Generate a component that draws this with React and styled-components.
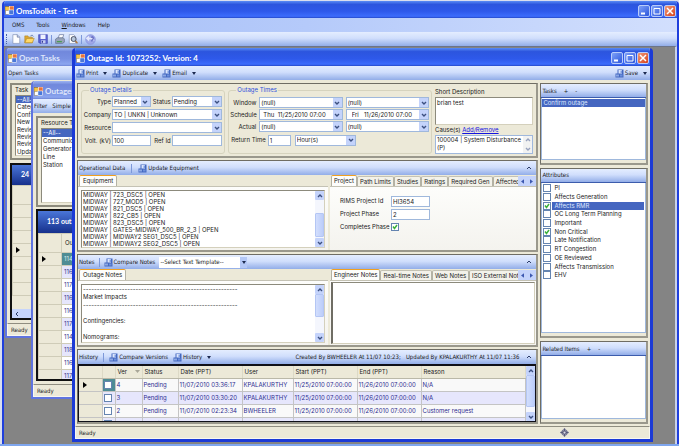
import React, { useState } from "react";
import styled, { createGlobalStyle, css } from "styled-components";

const formFont = `Inter, "Liberation Sans", Arial, sans-serif`;
const barFont = `"DejaVu Sans Condensed", "DejaVu Sans", Tahoma, sans-serif`;
const titleFont = `Lato, "Open Sans", "Trebuchet MS", sans-serif`;

const TASKS = ["--All--", "Category", "Confirm", "New", "Review", "Review", "Review", "Update"];
const RESOURCES = ["--All--", "Communication", "Generator", "Line", "Station"];
const OUTAGES = ["114", "116", "117", "116", "116", "117", "114", "118", "116", "117"];
const EQUIPMENT = [
  "MIDWAY | 723_DSC5 | OPEN",
  "MIDWAY | 727_MOD5 | OPEN",
  "MIDWAY | 821_DSC5 | OPEN",
  "MIDWAY | 822_CB5 | OPEN",
  "MIDWAY | 823_DSC5 | OPEN",
  "MIDWAY | GATES-MIDWAY_500_BR_2_3 | OPEN",
  "MIDWAY | MIDWAY2 SEG1_DSC5 | OPEN",
  "MIDWAY | MIDWAY2 SEG2_DSC5 | OPEN",
];
const ATTRIBUTES = [
  { name: "PI" },
  { name: "Affects Generation" },
  { name: "Affects RMR", checked: true, selected: true },
  { name: "OC Long Term Planning" },
  { name: "Important" },
  { name: "Non Critical", checked: true },
  { name: "Late Notification" },
  { name: "RT Congestion" },
  { name: "OE Reviewed" },
  { name: "Affects Transmission" },
  { name: "EHV" },
];
const HISTORY = [
  ["4", "Pending", "11/07/2010 03:36:17", "KPALAKURTHY", "11/25/2010 07:00:00", "11/26/2010 07:00:00", "N/A"],
  ["3", "Pending", "11/07/2010 03:30:20", "KPALAKURTHY", "11/25/2010 07:00:00", "11/26/2010 07:00:00", "N/A"],
  ["2", "Pending", "11/07/2010 02:23:34", "BWHEELER", "11/25/2010 07:00:00", "11/26/2010 07:00:00", "Customer request"],
  ["1", "Pending", "11/07/2010 02:22:04", "BWHEELER", "11/25/2010 07:00:00", "11/26/2010 07:00:00", "Customer request"],
];
const DASHES = "-".repeat(56);
const NOTES = `${DASHES}\nMarket Impacts\n${DASHES}\n\nContingencies:\n\nNomograms:`;

/* ---------- icons ---------- */

const FormIcon = () => (
  <svg width="9" height="9" viewBox="0 0 16 16" aria-hidden="true">
    <rect x="0" y="1" width="10" height="9" fill="#f4c64a" stroke="#8a6a2a" />
    <rect x="8" y="0" width="8" height="8" fill="#e8743c" stroke="#fff" />
    <rect x="1" y="8" width="7" height="7" fill="#fff" stroke="#9a8a6a" />
    <rect x="7" y="7" width="8" height="8" fill="#4a78d8" stroke="#fff" />
  </svg>
);

const ActionIcon = () => (
  <svg width="9" height="9" viewBox="0 0 18 18" aria-hidden="true">
    <path d="M5 1h12v16H1V9h4z" fill="#4468c0" />
    <rect x="7" y="2" width="7" height="7" fill="#dce6fc" />
    <rect x="11" y="3" width="3" height="5" fill="#7c9ce0" />
    <rect x="2" y="11" width="6" height="4" fill="#8ca8e4" />
    <rect x="10" y="11" width="5" height="4" fill="#6c90dc" />
  </svg>
);

const Chevron = ({ up }) => (
  <svg width="6" height="6" viewBox="0 0 6 6" aria-hidden="true">
    <path d={up ? "M1 4L3 2L5 4" : "M1 2L3 4L5 2"} fill="none" stroke="#3c5080" strokeWidth="1.4" />
  </svg>
);

const Caret = () => (
  <svg width="4" height="3" viewBox="0 0 4 3" aria-hidden="true">
    <path d="M0 0h4L2 3z" fill="#1c2a50" />
  </svg>
);

const SortMark = () => (
  <svg width="5" height="3" viewBox="0 0 5 3" aria-hidden="true">
    <path d="M0 0h5L2.5 3z" fill="#a8a698" />
  </svg>
);

const Side = ({ right }) => (
  <svg width="3" height="5" viewBox="0 0 4 6" aria-hidden="true">
    <path d={right ? "M0 0l4 3l-4 3z" : "M4 0L0 3l4 3z"} fill="#3c58b0" />
  </svg>
);

const RowArrow = () => (
  <svg width="4" height="6" viewBox="0 0 4 6" aria-hidden="true">
    <path d="M0 0l4 3l-4 3z" fill="#000" />
  </svg>
);

const Collapse = () => (
  <svg width="6" height="4" viewBox="0 0 6 4" aria-hidden="true">
    <path d="M1 3L3 1L5 3" fill="none" stroke="#2c3c68" />
  </svg>
);

const NewIcon = () => (
  <svg width="10" height="10" viewBox="0 0 16 16" aria-hidden="true">
    <path d="M3 1h7l4 4v10H3z" fill="#fff" stroke="#7888b0" />
    <path d="M10 1v4h4" fill="#c8d4f0" stroke="#5a6890" />
  </svg>
);
const OpenIcon = () => (
  <svg width="11" height="10" viewBox="0 0 17 16" aria-hidden="true">
    <path d="M1 3h5l1 2h6v9H1z" fill="#e0a830" stroke="#b08828" />
    <path d="M4 7h12l-3 7H1z" fill="#ffd868" stroke="#b08828" />
    <path d="M10 3q3-3 5 1" fill="none" stroke="#3c5890" />
  </svg>
);
const SaveIcon = () => (
  <svg width="10" height="10" viewBox="0 0 16 16" aria-hidden="true">
    <path d="M1 1h14v14H3l-2-2z" fill="#5a62d0" stroke="#4048b0" />
    <rect x="4" y="1" width="8" height="7" fill="#eef2ff" />
    <rect x="5" y="10" width="7" height="5" fill="#c4ccf0" />
    <rect x="6" y="11" width="2" height="3" fill="#343c98" />
  </svg>
);
const PrintIcon = () => (
  <svg width="10" height="10" viewBox="0 0 16 16" aria-hidden="true">
    <path d="M5 7l2-6h7l-2 6z" fill="#fff" stroke="#5a6890" />
    <path d="M1 8l3-2h9l2 2v5l-3 2H1z" fill="#98a4b8" stroke="#5a6888" />
    <path d="M3 12h8" stroke="#4a9a58" strokeWidth="2" />
  </svg>
);
const PreviewIcon = () => (
  <svg width="10" height="10" viewBox="0 0 16 16" aria-hidden="true">
    <path d="M2 1h7l3 3v11H2z" fill="#fff" stroke="#7888b0" />
    <circle cx="9" cy="8" r="4" fill="#b8c8dc" stroke="#444c60" strokeWidth="1.5" />
    <path d="M12 11l3 4" stroke="#b07838" strokeWidth="2.4" />
  </svg>
);
const HelpIcon = () => (
  <svg width="11" height="11" viewBox="0 0 16 16" aria-hidden="true">
    <circle cx="8" cy="8" r="7" fill="#a0a8e8" stroke="#8490dc" />
    <path d="M1 6l5-4v3q6 0 8 5q-4-3-8-2v3z" fill="#e4e8fc" />
    <path d="M9 5q3-2 3 1q0 2-2 3v2" fill="none" stroke="#5860b8" strokeWidth="1.5" />
  </svg>
);
const MoveIcon = () => (
  <svg width="9" height="9" viewBox="0 0 16 16" aria-hidden="true">
    <path d="M8 0l8 8l-8 8l-8-8z" fill="#8c8ca4" />
    <path d="M8 1v14M1 8h14M4 5l8 6M12 5l-8 6" stroke="#50506c" strokeWidth="1.5" />
    <circle cx="8" cy="8" r="2" fill="#dcdce8" />
  </svg>
);

/* ---------- shared parts ---------- */

const GlobalStyle = createGlobalStyle`
  * {
    box-sizing: border-box;
  }
  html, body {
    margin: 0;
    background: #d9deee;
  }
  body {
    font-family: ${formFont};
    font-size: 6px;
    line-height: 8px;
    color: #1a1a1a;
  }
  button, input, select, textarea {
    font: inherit;
    color: inherit;
    margin: 0;
    padding: 0;
    border: 0;
    border-radius: 0;
    background: none;
    outline: 0;
  }
  svg {
    display: block;
    flex-shrink: 0;
  }
`;

const barGradient = "linear-gradient(#e4edff, #d0defc 45%, #92ade8)";
const blueTitle = "linear-gradient(#5a8cf4, #2c55de 20%, #2e59ea 60%, #3c6cfc 90%, #2448c8)";
const paleTitle = "linear-gradient(#9db4f2, #7188dc 20%, #7890e2 60%, #8ca6f0 90%, #6e84d4)";

const Desktop = styled.div`
  min-height: 100vh;
  display: flex;
  flex-direction: column;
  padding: 1px 0 0 2px;
  border-bottom: 2px solid #7fa6ee;
`;

const Shell = styled.div`
  flex: 1;
  display: flex;
  flex-direction: column;
  border: 2px solid #1f3fdc;
  border-top: 0;
  border-bottom: 0;
  border-radius: 4px 4px 0 0;
  overflow: hidden;
`;

const TitleBar = styled.header`
  display: flex;
  align-items: center;
  flex-shrink: 0;
  gap: 2px;
  height: ${(p) => (p.$main ? 17 : 18)}px;
  padding: 2px 1px 0;
  background: ${(p) => (p.$inactive ? paleTitle : blueTitle)};
  color: ${(p) => (p.$inactive ? "#dfe6fb" : "#fff")};
`;

const TitleText = styled.h1`
  flex: 1;
  margin: 0;
  font-family: ${titleFont};
  font-size: 8px;
  line-height: 12px;
  font-weight: 700;
  white-space: nowrap;
`;

const CaptionGroup = styled.div`
  display: flex;
  gap: 1px;
`;

const Caption = styled.button`
  display: flex;
  width: 12px;
  height: 12px;
  border: 1px solid #b8ccfa;
  border-radius: 2px;
  background: ${(p) => (p.$close ? "linear-gradient(135deg, #f09a78, #d8431c)" : "linear-gradient(135deg, #7ea0f8, #2c56dc)")};
`;

const CaptionSvg = styled.svg`
  width: 10px;
  height: 10px;
`;

const MenuBar = styled.nav`
  display: flex;
  align-items: center;
  gap: 12px;
  height: 14px;
  padding: 0 8px;
  background: linear-gradient(90deg, #a6bff6, #b5cafa 45%, #d2dffd);
  font-family: ${barFont};
`;

const ToolStrip = styled.div`
  display: flex;
  align-items: center;
  flex-shrink: 0;
  gap: ${(p) => p.$gap || 4}px;
  height: 14px;
  padding: 0 3px 0 ${(p) => (p.$flush ? 1 : 2)}px;
  background: ${barGradient};
  font-family: ${barFont};
  white-space: nowrap;
`;

const Grip = styled.span`
  width: 2px;
  height: 10px;
  border-left: 1px dotted #4862a8;
`;

const Divider = styled.span`
  width: 1px;
  height: 9px;
  background: #7d98d8;
`;

const Spring = styled.span`
  flex: 1;
`;

const ToolButton = styled.button`
  display: flex;
  align-items: center;
  gap: 1px;
  white-space: nowrap;
`;

const Mdi = styled.main`
  position: relative;
  flex: 1;
  min-height: 398px;
  background: #848484;
  border-top: 1px solid #6c7488;
  border-right: 2px solid #c9d2ea;
  overflow: hidden;
`;

const edge = (p) => (p.$inactive ? "#5f74e0" : "#1b3ad6");

/* a child window, free on the MDI surface */
const Window = styled.section`
  position: absolute;
  display: flex;
  flex-direction: column;
  border: 2px solid ${edge};
  border-top: 0;
  border-radius: 4px 4px 0 0;
  background: #ece9d8;
  overflow: hidden;
`;

const TasksWindow = styled(Window)`
  top: 1px;
  left: 1px;
  width: 48%;
  height: 290px;
`;

const OutagesWindow = styled(Window)`
  top: 34px;
  left: 27px;
  width: 48%;
  height: 318px;
`;

const OutageWindow = styled(Window)`
  top: 1px;
  right: 22px;
  bottom: 2px;
  left: 68px;
  border-width: 0 3px 3px;
`;

const StatusBar = styled.footer`
  display: flex;
  align-items: center;
  flex-shrink: 0;
  height: 13px;
  padding: 0 80px 0 3px;
  border: 1px solid #f8f7f0;
  border-top: 1px solid #8f8d80;
  background: #ece9d8;
  font-family: ${barFont};
  justify-content: space-between;
`;

const inset = css`
  border: 1px solid #8c8a7c;
  border-right-color: #d4d0bc;
  border-bottom-color: #d4d0bc;
  background: #fff;
`;

const Body = styled.div`
  flex: 1;
  min-height: 0;
  display: flex;
  flex-direction: column;
  gap: ${(p) => p.$gap || 3}px;
  padding: 3px;
`;

const FilterBox = styled.div`
  display: flex;
  flex-direction: column;
  flex-shrink: 0;
  gap: 1px;
  height: ${(p) => p.$height}px;
  padding: 1px 3px 2px;
  border: 2px solid #8c8a7c;
  border-right-width: 1px;
`;

const PlainList = styled.ul`
  flex: 1;
  min-height: 0;
  display: grid;
  grid-auto-rows: ${(p) => (p.$fill ? "1fr" : "8px")};
  margin: 0;
  padding: 0;
  list-style: none;
  line-height: 7px;
  overflow: hidden;
  ${inset}
`;

const PlainItem = styled.li`
  min-height: 0;
  padding-left: 1px;
  white-space: nowrap;
  color: ${(p) => (p.$selected ? "#fff" : "#1a1a1a")};
  background: ${(p) => (p.$selected ? "#4566c0" : "none")};
`;

const BackGrid = styled.div`
  flex: 1;
  min-height: 0;
  display: flex;
  flex-direction: column;
  border: 2px solid #101010;
  overflow: hidden;
`;

const GridBanner = styled.h2`
  flex-shrink: 0;
  margin: 0;
  height: ${(p) => p.$height}px;
  padding-left: 9px;
  background: linear-gradient(#4a76d8, #16308c);
  color: #fff;
  font-family: ${titleFont};
  font-size: 7px;
  line-height: ${(p) => p.$height - 2}px;
  font-weight: 700;
`;

const BackTable = styled.table`
  width: 100%;
  table-layout: fixed;
  border-collapse: collapse;
  color: #34348c;
  th {
    height: 19px;
    text-align: left;
    vertical-align: middle;
    font-weight: 400;
    color: #1a1a1a;
    background: #ece9d8;
    border: 1px solid #cfccb8;
    padding: 0 3px;
  }
  td {
    height: 13px;
    padding: 0 2px;
    border: 1px solid #cfccb8;
    background: #fff;
  }
  tr:nth-child(even) td {
    background: #e6e6fc;
  }
  tbody tr td:first-child {
    background: #ece9d8;
    padding-left: 3px;
  }
  tbody tr:first-child td:nth-child(2) {
    background: ${(p) => (p.$teal ? "#4e8c94" : "#fff")};
    color: ${(p) => (p.$teal ? "#d8eef0" : "#34348c")};
  }
`;

const HScroll = styled.div`
  flex-shrink: 0;
  display: flex;
  align-items: center;
  height: 9px;
  padding-left: 3px;
  background: #c6d5fc;
`;

/* ---------- outage window layout ---------- */

const Workspace = styled.div`
  flex: 1;
  min-height: 0;
  display: grid;
  grid-template-columns: 463fr 108fr;
  gap: 2px;
  padding: 3px 2px 2px;
`;

const MainColumn = styled.div`
  min-width: 0;
  min-height: 0;
  display: grid;
  grid-template-rows: auto 92fr 93fr 75fr;
  gap: 2px;
`;

const SideColumn = styled.div`
  min-width: 0;
  min-height: 0;
  display: grid;
  grid-template-rows: 82fr 171fr 83fr;
  gap: 3px;
`;

const Panel = styled.section`
  display: flex;
  flex-direction: column;
  min-height: 0;
  min-width: 0;
  border: 1px solid #6f6d64;
  border-right: 2px solid #9a988c;
  border-bottom: 2px solid #9a988c;
  overflow: hidden;
`;

const DetailsPanel = styled(Panel)`
  flex-direction: row;
  gap: 3px;
  padding: 2px 3px;
`;

const Group = styled.fieldset`
  min-width: 0;
  margin: 0;
  padding: ${(p) => p.$top}px 2px 2px 1px;
  border: 1px solid #d6d3be;
  border-radius: 3px;
`;

const Legend = styled.legend`
  margin-left: 6px;
  padding: 0 1px;
  color: #2c50dc;
`;

const DetailsGroup = styled(Group)`
  flex: 143 1 0;
`;
const TimesGroup = styled(Group)`
  flex: 204 1 0;
`;

const DetailGrid = styled.div`
  display: grid;
  grid-template-columns: 28px 39fr 19px 51fr;
  grid-auto-rows: 11px;
  gap: 2px 1px;
  align-items: center;
`;

const TimeGrid = styled.div`
  display: grid;
  grid-template-columns: 26px 1fr 1fr;
  grid-auto-rows: 11px;
  gap: 1px 3px;
  align-items: center;
`;

const ReturnRow = styled.div`
  display: flex;
  align-items: center;
  gap: 2px;
  height: 12px;
  margin: 2px 73px 0 1px;
`;

const Label = styled.label`
  text-align: ${(p) => (p.$left ? "left" : "right")};
  white-space: nowrap;
`;

const TextInput = styled.input`
  width: 100%;
  min-width: 0;
  height: 11px;
  padding: 0 1px;
  border: 1px solid #9fb8dc;
  background: #fff;
`;

const ReturnInput = styled(TextInput)`
  width: 23px;
  margin-right: 2px;
`;

const ComboFrame = styled.span`
  display: flex;
  align-items: center;
  flex: 1;
  min-width: 0;
  height: 11px;
  border: 1px solid #9fb8dc;
  background: #fff;
  grid-column: span ${(p) => p.$span || 1};
`;

const ComboSelect = styled.select`
  flex: 1;
  min-width: 0;
  height: 9px;
  padding-left: ${(p) => p.$indent || 1}px;
  appearance: none;
`;

const ComboArrow = styled.span`
  display: flex;
  align-items: center;
  justify-content: center;
  width: 9px;
  height: 9px;
  background: #c4d3fb;
  pointer-events: none;
`;

const DescColumn = styled.div`
  flex: 101 1 0;
  min-width: 0;
  display: flex;
  flex-direction: column;
  gap: 1px;
  padding-top: 2px;
`;

const DescText = styled.textarea`
  display: block;
  width: 100%;
  height: 28px;
  padding: 1px;
  resize: none;
  overflow: hidden;
  ${inset}
`;

const Link = styled.a`
  color: #1414e0;
`;

const CauseBox = styled.div`
  display: flex;
  height: 19px;
  border: 1px solid #9fb8dc;
  background: #fff;
`;

const CauseText = styled.div`
  flex: 1;
  padding-left: 1px;
`;

const PanelHead = styled(ToolStrip)`
  padding: 0 4px 0 1px;
  border-bottom: ${(p) => (p.$ruled ? "1px solid #3c5cac" : "0")};
`;

const HeadTitle = styled.h2`
  margin: 0;
  font-size: 6px;
  font-weight: 400;
`;

const Split = styled.div`
  flex: 1;
  min-height: 0;
  display: grid;
  grid-template-columns: 252fr 208fr;
  gap: 2px;
`;

const TabPane = styled.div`
  display: flex;
  flex-direction: column;
  min-width: 0;
  min-height: 0;
`;

const TabStrip = styled.div`
  display: flex;
  align-items: flex-end;
  flex-shrink: 0;
  height: 11px;
  padding-left: 1px;
  overflow: hidden;
`;

const Tab = styled.button`
  flex-shrink: 0;
  height: ${(p) => (p.$active ? 11 : 10)}px;
  padding: 0 ${(p) => (p.$wide ? 3 : 2)}px;
  border: 1px solid #b4b2a4;
  border-bottom: 0;
  border-top: ${(p) => (p.$active ? "1px solid #f0a020" : "1px solid #c4c2b4")};
  border-radius: 2px 2px 0 0;
  background: ${(p) => (p.$active ? "#fdfdfb" : "#f3f2ea")};
  white-space: nowrap;
`;

const TabClip = styled.div`
  display: flex;
  align-items: flex-end;
  flex: 1;
  min-width: 0;
  overflow: hidden;
`;

const TabArrows = styled.div`
  display: flex;
  align-items: center;
  justify-content: space-around;
  width: 18px;
  height: 10px;
  flex-shrink: 0;
  background: #c4d3fb;
`;

const TabBody = styled.div`
  flex: 1;
  min-height: 0;
  display: flex;
  padding: ${(p) => p.$pad || "3px 3px 2px"};
  background: linear-gradient(#fdfdfb, #f4f3ee);
  border-top: 1px solid #c4c2b4;
`;

const ListFrame = styled.div`
  flex: 1;
  min-width: 0;
  display: flex;
  overflow: hidden;
  ${inset}
`;

const EquipmentList = styled.ul`
  flex: 1;
  min-width: 0;
  display: grid;
  grid-auto-rows: 1fr;
  align-items: center;
  margin: 0;
  padding: 0 0 0 1px;
  list-style: none;
  line-height: 7px;
  white-space: nowrap;
  li {
    min-height: 0;
  }
`;

const NotesText = styled.textarea`
  flex: 1;
  min-width: 0;
  padding: 0 1px;
  resize: none;
  overflow: hidden;
  white-space: pre;
`;

const EngineerText = styled.textarea`
  flex: 1;
  min-width: 0;
  resize: none;
  ${inset}
  border-left: 2px solid #6f6d64;
`;

const ProjectForm = styled.div`
  display: grid;
  grid-template-columns: 50px 39px;
  grid-auto-rows: 12px;
  gap: 1px;
  align-items: center;
`;

const Bar = styled.div`
  display: flex;
  flex-direction: column;
  flex-shrink: 0;
  width: 9px;
  background: #f4f6fd;
`;

const BarButton = styled.button`
  display: flex;
  align-items: center;
  justify-content: center;
  height: 9px;
  border-radius: 1px;
  background: ${(p) => (p.$faint ? "#f0efe8" : "#c4d3fb")};
  opacity: ${(p) => (p.$faint ? 0.5 : 1)};
`;

const Thumb = styled.span`
  flex: ${(p) => p.$size} 1 0;
  border: 1px solid #b4c6f4;
  border-radius: 1px;
  background: linear-gradient(90deg, #d2defd, #bccdfa);
`;

const Gap = styled.span`
  flex: ${(p) => p.$size} 1 0;
`;

const TemplateFrame = styled.span`
  display: flex;
  align-items: center;
  width: 88px;
  height: 11px;
  background: #fff;
`;

const TemplateArrow = styled.span`
  display: flex;
  align-items: center;
  justify-content: center;
  width: 7px;
  height: 11px;
  background: #b4c8f6;
  pointer-events: none;
`;

const Check = styled.input`
  flex-shrink: 0;
  width: 8px;
  height: 8px;
  appearance: none;
  border: 1px solid #6484b0;
  background: #fff;
`;

const CheckHolder = styled.span`
  position: relative;
  display: flex;
`;

const Tick = styled.svg`
  position: absolute;
  top: 1px;
  left: 1px;
  width: 6px;
  height: 6px;
  pointer-events: none;
`;

const SideList = styled.div`
  flex: 1;
  min-height: 0;
  margin-bottom: 3px;
  background: #fff;
  border: 1px solid #9fb8dc;
  border-top: 0;
  overflow: hidden;
`;

const TaskItem = styled.div`
  height: 8px;
  margin-top: 1px;
  padding-left: 1px;
  background: #4566c0;
  color: #dfe8ff;
`;

const AttributeList = styled.ul`
  display: grid;
  grid-template-rows: repeat(11, 1fr);
  height: 97px;
  margin: 0;
  padding: 1px 1px 0;
  list-style: none;
`;

const AttributeItem = styled.li`
  display: flex;
  align-items: center;
  min-height: 0;
  gap: 1px;
`;

const AttributeLabel = styled.label`
  flex: 1;
  padding-left: 2px;
  background: ${(p) => (p.$selected ? "#4566c0" : "none")};
  color: ${(p) => (p.$selected ? "#dfe8ff" : "inherit")};
`;

const HistoryFrame = styled.div`
  flex: 1;
  min-height: 0;
  display: flex;
  border: 1px solid #101018;
  border-top-width: 2px;
  overflow: hidden;
`;

const HistoryClip = styled.div`
  flex: 1;
  min-width: 0;
  overflow: hidden;
`;

const HistoryTable = styled.table`
  width: 100%;
  table-layout: fixed;
  border-collapse: collapse;
  white-space: nowrap;
  color: #2c2c90;
  th {
    height: 12px;
    padding: 0 2px;
    text-align: left;
    font-weight: 400;
    color: #1a1a1a;
    background: #ece9d8;
    border-right: 1px solid #dcd9c6;
    border-bottom: 1px solid #bab8a8;
  }
  td {
    height: 13px;
    padding: 0 1px;
    border-right: 1px solid #c4c4c4;
    border-bottom: 1px solid #c4c4c4;
    background: #f9f9f9;
  }
  tbody tr:nth-child(even) td {
    background: #e6e6fc;
  }
  tbody tr td:first-child {
    padding-left: 4px;
    background: #ece9d8;
  }
  tbody tr:first-child td:nth-child(2) {
    background: #4e8c94;
  }
`;

const SortHead = styled.span`
  display: flex;
  align-items: center;
  justify-content: space-between;
`;

const Stamp = styled.span`
  padding-right: 2px;
  white-space: pre;
`;

const Captions = () => (
  <CaptionGroup>
    <Caption aria-label="Minimize">
      <CaptionSvg viewBox="0 0 10 10"><path d="M2 7.5h4" stroke="#fff" strokeWidth="2" /></CaptionSvg>
    </Caption>
    <Caption aria-label="Maximize">
      <CaptionSvg viewBox="0 0 10 10"><path d="M2 2.5h6v5.5H2z" fill="none" stroke="#fff" /></CaptionSvg>
    </Caption>
    <Caption aria-label="Close" $close>
      <CaptionSvg viewBox="0 0 10 10"><path d="M2 2l6 6M8 2l-6 6" stroke="#fff" strokeWidth="1.5" /></CaptionSvg>
    </Caption>
  </CaptionGroup>
);

const Combo = ({ id, label, value, span, indent }) => (
  <ComboFrame $span={span}>
    <ComboSelect id={id} aria-label={label} defaultValue={value} $indent={indent}>
      <option value={value}>{value}</option>
    </ComboSelect>
    <ComboArrow><Chevron /></ComboArrow>
  </ComboFrame>
);

const CheckBox = ({ id, label, initial = false }) => {
  const [on, setOn] = useState(initial);
  return (
    <CheckHolder>
      <Check type="checkbox" id={id} aria-label={label} checked={on} onChange={() => setOn(!on)} />
      {on ? (
        <Tick viewBox="0 0 6 6"><path d="M1 2.5L2.5 4.5L5 1" fill="none" stroke="#3cb03c" strokeWidth="1.5" /></Tick>
      ) : (
        ""
      )}
    </CheckHolder>
  );
};

const ScrollBar = ({ before, size, after }) => (
  <Bar>
    <BarButton aria-label="Scroll up"><Chevron up /></BarButton>
    <Gap $size={before} />
    <Thumb $size={size} />
    <Gap $size={after} />
    <BarButton aria-label="Scroll down"><Chevron /></BarButton>
  </Bar>
);

const Tabs = ({ names, wide }) => {
  const [active, setActive] = useState(names[0]);
  return (
    <TabStrip role="tablist">
      <TabClip>
        {names.map((name) => (
          <Tab key={name} role="tab" aria-selected={name === active} $active={name === active} $wide={wide} onClick={() => setActive(name)}>
            {name}
          </Tab>
        ))}
      </TabClip>
      {names.length > 1 ? (
        <TabArrows>
          <button aria-label="Previous tabs"><Side /></button>
          <button aria-label="Next tabs"><Side right /></button>
        </TabArrows>
      ) : (
        ""
      )}
    </TabStrip>
  );
};

const OpenTasks = () => (
  <TasksWindow $inactive>
    <TitleBar $inactive>
      <FormIcon />
      <TitleText as="h2">Open Tasks</TitleText>
    </TitleBar>
    <ToolStrip $flush>Open Tasks</ToolStrip>
    <Body>
      <FilterBox $height={77}>
        Task
        <PlainList $fill>
          {TASKS.map((task, i) => (
            <PlainItem key={i} $selected={i === 0}>{task}</PlainItem>
          ))}
        </PlainList>
      </FilterBox>
      <BackGrid>
        <GridBanner $height={20}>24</GridBanner>
        <BackTable>
          <colgroup><col style={{ width: 20 }} /><col /></colgroup>
          <thead><tr><th /><th /></tr></thead>
          <tbody>
            {[0, 1, 2, 3, 4, 5, 6].map((row) => (
              <tr key={row}><td>{row === 3 ? <RowArrow /> : ""}</td><td /></tr>
            ))}
          </tbody>
        </BackTable>
        <Spring />
        <HScroll>
          <svg width="4" height="6" viewBox="0 0 4 6"><path d="M3 1L1 3l2 2" fill="none" stroke="#2c3c68" /></svg>
        </HScroll>
      </BackGrid>
    </Body>
    <StatusBar>Ready</StatusBar>
  </TasksWindow>
);

const Outages = () => (
  <OutagesWindow $inactive>
    <TitleBar $inactive>
      <FormIcon />
      <TitleText as="h2">Outages</TitleText>
    </TitleBar>
    <ToolStrip $flush $gap={5}>
      <span>Filter</span>
      <span>Simple</span>
    </ToolStrip>
    <Body $gap={2}>
      <FilterBox $height={91}>
        Resource Type
        <PlainList>
          {RESOURCES.map((name, i) => (
            <PlainItem key={name} $selected={i === 0}>{name}</PlainItem>
          ))}
        </PlainList>
      </FilterBox>
      <BackGrid>
        <GridBanner $height={22}>113 outages</GridBanner>
        <BackTable $teal>
          <colgroup><col style={{ width: 23 }} /><col /></colgroup>
          <thead><tr><th /><th>Outage</th></tr></thead>
          <tbody>
            {OUTAGES.map((id, i) => (
              <tr key={i}><td>{i === 0 ? <RowArrow /> : ""}</td><td>{id}</td></tr>
            ))}
          </tbody>
        </BackTable>
      </BackGrid>
    </Body>
    <StatusBar>Ready</StatusBar>
  </OutagesWindow>
);

const Details = () => (
  <DetailsPanel>
    <DetailsGroup $top={2}>
      <Legend>Outage Details</Legend>
      <DetailGrid>
        <Label htmlFor="type">Type</Label>
        <Combo id="type" value="Planned" />
        <Label htmlFor="status">Status</Label>
        <Combo id="status" value="Pending" />
        <Label htmlFor="company">Company</Label>
        <Combo id="company" value="TO | UNKN | Unknown" span={3} />
        <Label htmlFor="resource">Resource</Label>
        <Combo id="resource" value="" span={3} />
        <Label htmlFor="volt">Volt. (kV)</Label>
        <TextInput id="volt" defaultValue="100" />
        <Label htmlFor="ref">Ref Id</Label>
        <TextInput id="ref" />
      </DetailGrid>
    </DetailsGroup>
    <TimesGroup $top={3}>
      <Legend>Outage Times</Legend>
      <TimeGrid>
        <Label htmlFor="window">Window</Label>
        <Combo id="window" value="(null)" />
        <Combo label="Window end" value="(null)" />
        <Label htmlFor="schedule">Schedule</Label>
        <Combo id="schedule" value={"Thu\u00a0 11/25/2010 07:00"} indent={3} />
        <Combo label="Schedule end" value={"Fri\u00a0 \u00a011/26/2010 07:00"} indent={5} />
        <Label htmlFor="actual">Actual</Label>
        <Combo id="actual" value="(null)" />
        <Combo label="Actual end" value="(null)" />
      </TimeGrid>
      <ReturnRow>
        <Label htmlFor="return">Return Time</Label>
        <ReturnInput id="return" defaultValue="1" />
        <Combo label="Return unit" value="Hour(s)" />
      </ReturnRow>
    </TimesGroup>
    <DescColumn>
      <Label $left htmlFor="desc">Short Description</Label>
      <DescText id="desc" defaultValue="brian test" />
      <div>Cause(s) <Link href="#causes">Add/Remove</Link></div>
      <CauseBox>
        <CauseText>100004 | System Disturbance (P)</CauseText>
        <Bar>
          <BarButton $faint aria-label="Scroll up"><Chevron up /></BarButton>
          <BarButton $faint aria-label="Scroll down"><Chevron /></BarButton>
        </Bar>
      </CauseBox>
    </DescColumn>
  </DetailsPanel>
);

const Operational = () => (
  <Panel>
    <PanelHead $gap={6}>
      <HeadTitle>Operational Data</HeadTitle>
      <Divider />
      <ToolButton><ActionIcon />Update Equipment</ToolButton>
      <Spring />
      <Collapse />
    </PanelHead>
    <Split>
      <TabPane>
        <Tabs wide names={["Equipment"]} />
        <TabBody>
          <ListFrame>
            <EquipmentList>
              {EQUIPMENT.map((item) => (
                <li key={item}>{item}</li>
              ))}
            </EquipmentList>
            <ScrollBar before={13} size={22} after={1} />
          </ListFrame>
        </TabBody>
      </TabPane>
      <TabPane>
        <Tabs names={["Project", "Path Limits", "Studies", "Ratings", "Required Gen", "Affected"]} />
        <TabBody $pad="8px 10px">
          <ProjectForm>
            <Label $left htmlFor="rims">RIMS Project Id</Label>
            <TextInput id="rims" defaultValue="HI3654" />
            <Label $left htmlFor="phase">Project Phase</Label>
            <TextInput id="phase" defaultValue="2" />
            <Label $left htmlFor="completes">Completes Phase</Label>
            <CheckBox id="completes" initial />
          </ProjectForm>
        </TabBody>
      </TabPane>
    </Split>
  </Panel>
);

const Notes = () => (
  <Panel>
    <PanelHead>
      <HeadTitle>Notes</HeadTitle>
      <Divider />
      <ToolButton><ActionIcon />Compare Notes</ToolButton>
      <TemplateFrame>
        <ComboSelect aria-label="Text template">
          <option>--Select Text Template--</option>
        </ComboSelect>
        <TemplateArrow><Caret /></TemplateArrow>
      </TemplateFrame>
      <Spring />
      <Collapse />
    </PanelHead>
    <Split>
      <TabPane>
        <Tabs wide names={["Outage Notes"]} />
        <TabBody>
          <ListFrame>
            <NotesText aria-label="Outage Notes" defaultValue={NOTES} />
            <ScrollBar before={0} size={22} after={16} />
          </ListFrame>
        </TabBody>
      </TabPane>
      <TabPane>
        <Tabs names={["Engineer Notes", "Real-time Notes", "Web Notes", "ISO External Notes"]} />
        <TabBody $pad="1px">
          <EngineerText aria-label="Engineer Notes" />
        </TabBody>
      </TabPane>
    </Split>
  </Panel>
);

const History = () => (
  <Panel>
    <PanelHead $gap={5}>
      <HeadTitle>History</HeadTitle>
      <Divider />
      <ToolButton><ActionIcon />Compare Versions</ToolButton>
      <ToolButton><ActionIcon />History</ToolButton>
      <Caret />
      <Spring />
      <Stamp>{"Created By BWHEELER At 11/07 10:23;   Updated By KPALAKURTHY At 11/07 11:36"}</Stamp>
      <Collapse />
    </PanelHead>
    <HistoryFrame>
      <HistoryClip>
        <HistoryTable>
          <colgroup>
            {[23, 13, 27, 36, 64, 51, 64, 64].map((width, i) => (
              <col key={i} style={{ width }} />
            ))}
            <col />
          </colgroup>
          <thead>
            <tr>
              <th />
              <th />
              <th><SortHead>Ver <SortMark /></SortHead></th>
              <th>Status</th>
              <th>Date (PPT)</th>
              <th>User</th>
              <th>Start (PPT)</th>
              <th>End (PPT)</th>
              <th>Reason</th>
            </tr>
          </thead>
          <tbody>
            {HISTORY.map((row, i) => (
              <tr key={row[0]}>
                <td>{i === 0 ? <RowArrow /> : ""}</td>
                <td><CheckBox label={`Version ${row[0]}`} /></td>
                {row.map((cell, j) => (
                  <td key={j}>{cell}</td>
                ))}
              </tr>
            ))}
          </tbody>
        </HistoryTable>
      </HistoryClip>
      <ScrollBar before={0} size={30} after={5} />
    </HistoryFrame>
  </Panel>
);

const OutageForm = () => (
  <OutageWindow>
    <TitleBar>
      <FormIcon />
      <TitleText as="h2">Outage Id: 1073252; Version: 4</TitleText>
      <Captions />
    </TitleBar>
    <ToolStrip $flush $gap={5}>
      <ToolButton><ActionIcon />Print</ToolButton>
      <Caret />
      <ToolButton><ActionIcon />Duplicate</ToolButton>
      <Caret />
      <ToolButton><ActionIcon />Email</ToolButton>
      <Caret />
      <Spring />
      <ToolButton><ActionIcon />Save</ToolButton>
      <Caret />
    </ToolStrip>
    <Workspace>
      <MainColumn>
        <Details />
        <Operational />
        <Notes />
        <History />
      </MainColumn>
      <SideColumn>
        <Panel>
          <PanelHead $ruled $gap={7}>
            <HeadTitle>Tasks</HeadTitle>
            <button aria-label="Add task">+</button>
            <button aria-label="Remove task">-</button>
          </PanelHead>
          <SideList><TaskItem>Confirm outage</TaskItem></SideList>
        </Panel>
        <Panel>
          <PanelHead $ruled>
            <HeadTitle>Attributes</HeadTitle>
          </PanelHead>
          <SideList>
            <AttributeList>
              {ATTRIBUTES.map((item, i) => (
                <AttributeItem key={item.name}>
                  <CheckBox id={`attr${i}`} initial={item.checked} />
                  <AttributeLabel htmlFor={`attr${i}`} $selected={item.selected}>{item.name}</AttributeLabel>
                </AttributeItem>
              ))}
            </AttributeList>
          </SideList>
        </Panel>
        <Panel>
          <PanelHead $ruled $gap={7}>
            <HeadTitle>Related Items</HeadTitle>
            <button aria-label="Add item">+</button>
            <button aria-label="Remove item">-</button>
          </PanelHead>
          <SideList />
        </Panel>
      </SideColumn>
    </Workspace>
    <StatusBar>
      Ready
      <MoveIcon />
    </StatusBar>
  </OutageWindow>
);

const App = () => (
  <>
    <GlobalStyle />
    <Desktop>
      <Shell>
        <TitleBar $main>
          <FormIcon />
          <TitleText>OmsToolkit - Test</TitleText>
          <Captions />
        </TitleBar>
        <MenuBar>
          <button>OMS</button>
          <button>Tools</button>
          <button><u>W</u>indows</button>
          <button>Help</button>
        </MenuBar>
        <ToolStrip $gap={3}>
          <Grip />
          <button aria-label="New"><NewIcon /></button>
          <button aria-label="Open"><OpenIcon /></button>
          <button aria-label="Save"><SaveIcon /></button>
          <Divider />
          <button aria-label="Print"><PrintIcon /></button>
          <button aria-label="Preview"><PreviewIcon /></button>
          <Divider />
          <button aria-label="Help"><HelpIcon /></button>
        </ToolStrip>
        <Mdi>
          <OpenTasks />
          <Outages />
          <OutageForm />
        </Mdi>
      </Shell>
    </Desktop>
  </>
);

export default App;
